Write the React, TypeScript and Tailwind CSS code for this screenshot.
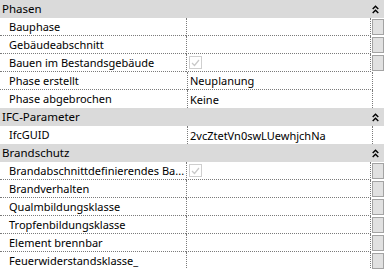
import React from "react";

type Row = {
  label: string;
  value?: string;
  check?: boolean;
  btn?: boolean;
};

type Group = {
  title: string;
  rows: Row[];
};

const groups: Group[] = [
  {
    title: "Phasen",
    rows: [
      { label: "Bauphase", btn: true },
      { label: "Gebäudeabschnitt", btn: true },
      { label: "Bauen im Bestandsgebäude", check: true, btn: true },
      { label: "Phase erstellt", value: "Neuplanung" },
      { label: "Phase abgebrochen", value: "Keine" },
    ],
  },
  {
    title: "IFC-Parameter",
    rows: [{ label: "IfcGUID", value: "2vcZtetVn0swLUewhjchNa" }],
  },
  {
    title: "Brandschutz",
    rows: [
      { label: "Brandabschnittdefinierendes Ba...", check: true, btn: true },
      { label: "Brandverhalten", btn: true },
      { label: "Qualmbildungsklasse", btn: true },
      { label: "Tropfenbildungsklasse", btn: true },
      { label: "Element brennbar", btn: true },
      { label: "Feuerwiderstandsklasse_", btn: true },
    ],
  },
];

function Collapse() {
  return (
    <svg width="7" height="9" viewBox="0 0 7 9" className="mr-[5px]">
      <path d="M0.7 4 L3.5 1.2 L6.3 4" fill="none" stroke="#000" strokeWidth="1.4" />
      <path d="M0.7 8 L3.5 5.2 L6.3 8" fill="none" stroke="#000" strokeWidth="1.4" />
    </svg>
  );
}

function Check() {
  return (
    <div className="w-[13px] h-[13px] border border-[#cfcfcf] bg-white flex items-center justify-center">
      <svg width="9" height="8" viewBox="0 0 9 8">
        <path d="M1 4 L3.5 6.5 L8 1" fill="none" stroke="#c8c8c8" strokeWidth="1.2" />
      </svg>
    </div>
  );
}

export default function App() {
  return (
    <div
      className="w-[384px] h-[269px] overflow-hidden bg-white text-[11px] text-black"
      style={{ fontFamily: '"Noto Sans", "Liberation Sans", sans-serif' }}
    >
      {groups.map((g) => (
        <div key={g.title}>
          {/* Gruppenkopf */}
          <div className="h-[18px] bg-[#dadada] flex items-center justify-between pl-[2px]">
            <span className="leading-[18px] text-[11.5px]">{g.title}</span>
            <Collapse />
          </div>

          {g.rows.map((r, i) => {
            const line = i < g.rows.length - 1 ? "border-b border-dotted border-[#7a7a7a]" : "";
            return (
              <div key={r.label} className="h-[18px] flex">
                <div className={`w-[187px] pl-[9px] leading-[17px] whitespace-nowrap ${line}`}>
                  {r.label}
                </div>
                <div
                  className={`w-[186px] border-l border-r border-dotted border-[#7a7a7a] pl-[2px] flex items-center whitespace-nowrap ${line}`}
                >
                  {r.check ? <Check /> : <span className="leading-[17px]">{r.value}</span>}
                </div>
                <div className="flex-1 pl-[1px] py-[1px]">
                  {r.btn && (
                    <div className="w-[12px] h-full border border-[#a3a3a3] bg-[#e1e1e1]" />
                  )}
                </div>
              </div>
            );
          })}
        </div>
      ))}
    </div>
  );
}
